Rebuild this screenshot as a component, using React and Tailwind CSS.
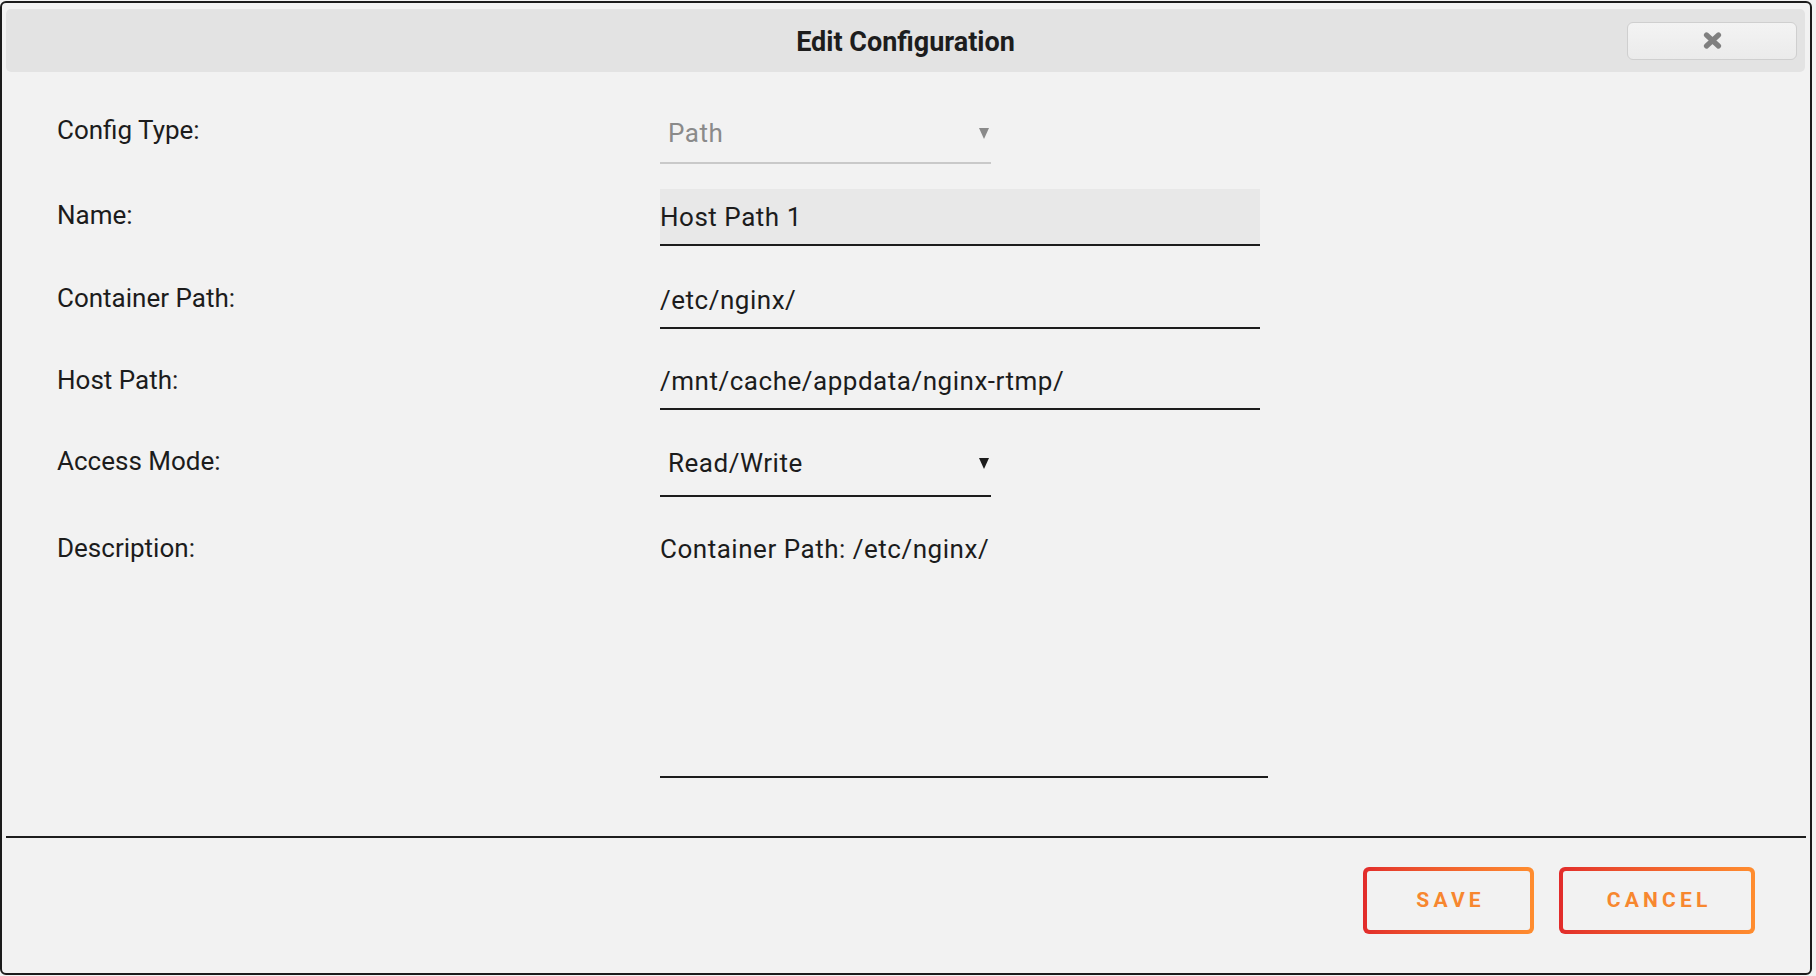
import React, { useState } from "react";

const Arrow = ({ color }) => (
  <svg width="10" height="11" viewBox="0 0 10 11" className="shrink-0">
    <path d="M0 0 H10 L5 11 Z" fill={color} />
  </svg>
);

const Field = ({ value, onChange, filled }) => (
  <input
    type="text"
    value={value}
    onChange={onChange}
    className={`w-[600px] h-[57px] border-b-2 border-[#1c1c1c] text-[26px] tracking-[0.02em] text-[#1c1c1c] outline-none ${
      filled ? "bg-[#e8e8e8]" : "bg-transparent"
    }`}
  />
);

const App = () => {
  const [formData, setFormdata] = useState({
    name: "Host Path 1",
    containerPath: "/etc/nginx/",
    hostPath: "/mnt/cache/appdata/nginx-rtmp/",
  });

  const handleChange = (e) => {
    const { name, value } = e.target;
    setFormdata((prev) => ({ ...prev, [name]: value }));
  };

  return (
    <div className="w-full min-h-screen bg-[#f2f2f2] font-['Roboto',sans-serif] pt-[1px]">
      <div className="w-[1812px] h-[974px] border-2 border-[#1b1b1b] rounded-[6px] bg-[#f2f2f2] flex flex-col">
        {/* title bar */}
        <div className="mt-[6px] ml-[4px] mr-[5px] h-[63px] rounded-[5px] bg-[#e3e3e3] grid grid-cols-[1fr_auto_1fr] items-center">
          <div />
          <h1 className="text-[27px] font-bold text-[#1d1d1d] leading-none pt-[4px]">
            Edit Configuration
          </h1>
          <button className="justify-self-end mr-[8px] w-[170px] h-[38px] rounded-[6px] border border-[#cfcfcf] bg-linear-to-b from-[#f3f3f3] to-[#ebebeb] flex items-center justify-center">
            <svg width="21" height="19" viewBox="0 0 21 19">
              <path
                d="M4.5 4 L16.5 15 M16.5 4 L4.5 15"
                stroke="#808080"
                strokeWidth="5.2"
                strokeLinecap="round"
              />
            </svg>
          </button>
        </div>

        {/* form */}
        <div className="flex flex-col pl-[55px] text-[26px] text-[#1c1c1c]">
          <div className="mt-[32px] flex items-center">
            <label className="w-[603px] pb-[8px]">Config Type:</label>
            <div className="w-[331px] h-[60px] border-b-2 border-[#c9c9c9] flex items-center justify-between pl-[8px] pr-[2px]">
              <span className="text-[#8a8a8a] tracking-[0.02em]">Path</span>
              <Arrow color="#8a8a8a" />
            </div>
          </div>

          <div className="mt-[25px] flex items-center">
            <label className="w-[603px] pb-[4px]">Name:</label>
            <Field name="name" value={formData.name} onChange={handleChange} filled />
          </div>

          <div className="mt-[26px] flex items-center">
            <label className="w-[603px] pb-[4px]">Container Path:</label>
            <Field value={formData.containerPath} onChange={(e) => setFormdata((p) => ({ ...p, containerPath: e.target.value }))} />
          </div>

          <div className="mt-[24px] flex items-center">
            <label className="w-[603px] pb-[2px]">Host Path:</label>
            <Field value={formData.hostPath} onChange={(e) => setFormdata((p) => ({ ...p, hostPath: e.target.value }))} />
          </div>

          <div className="mt-[22px] flex items-center">
            <label className="w-[603px] pb-[6px]">Access Mode:</label>
            <div className="w-[331px] h-[65px] border-b-2 border-[#1c1c1c] flex items-center justify-between pl-[8px] pr-[2px]">
              <span className="tracking-[0.02em]">Read/Write</span>
              <Arrow color="#1c1c1c" />
            </div>
          </div>

          <div className="mt-[23px] flex items-start">
            <label className="w-[603px] pt-[13px] leading-[30px]">Description:</label>
            <div className="w-[608px] h-[258px] border-b-2 border-[#1c1c1c] pt-[14px] leading-[30px] tracking-[0.02em]">
              Container Path: /etc/nginx/
            </div>
          </div>
        </div>

        {/* footer */}
        <div className="mt-[58px] mx-[4px] h-[2px] bg-[#1e1e1e]" />
        <div className="mt-[29px] flex justify-end gap-[25px] pr-[55px]">
          <div className="w-[171px] h-[67px] p-[4px] rounded-[6px] bg-linear-to-r from-[#e22b2b] to-[#ff8d2f]">
            <button className="w-full h-full rounded-[3px] bg-[#f2f2f2] text-[21px] font-bold tracking-[0.2em] pl-[0.2em] text-[#f7872f]">
              SAVE
            </button>
          </div>
          <div className="w-[196px] h-[67px] p-[4px] rounded-[6px] bg-linear-to-r from-[#e22b2b] to-[#ff8d2f]">
            <button className="w-full h-full rounded-[3px] bg-[#f2f2f2] text-[21px] font-bold tracking-[0.2em] pl-[0.2em] text-[#f7872f]">
              CANCEL
            </button>
          </div>
        </div>
      </div>
    </div>
  );
};

export default App;
